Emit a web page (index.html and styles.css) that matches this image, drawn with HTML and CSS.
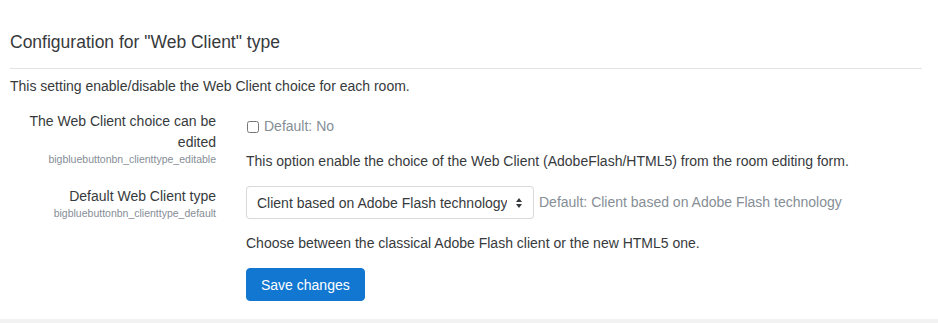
FILE: index.html
```html
<!DOCTYPE html>
<html lang="en">
<head>
    <meta charset="UTF-8">
    <meta name="viewport" content="width=device-width, initial-scale=1.0">
    <title>Web Client settings</title>
    <link rel="stylesheet" href="styles.css">
</head>
<body>
    <div class="main">
        <h3 class="section-title">Configuration for "Web Client" type</h3>
        <hr class="divider">
        <p class="section-info">This setting enable/disable the Web Client choice for each room.</p>

        <form class="settings">
            <div class="setting">
                <div class="setting-label">
                    <label for="clienttype_editable">The Web Client choice can be edited</label>
                    <span class="setting-name">bigbluebuttonbn_clienttype_editable</span>
                </div>
                <div class="setting-field">
                    <div class="check-row">
                        <input type="checkbox" id="clienttype_editable">
                        <span class="muted">Default: No</span>
                    </div>
                    <div class="setting-desc">This option enable the choice of the Web Client (AdobeFlash/HTML5) from the room editing form.</div>
                </div>
            </div>

            <div class="setting">
                <div class="setting-label">
                    <label for="clienttype_default">Default Web Client type</label>
                    <span class="setting-name">bigbluebuttonbn_clienttype_default</span>
                </div>
                <div class="setting-field">
                    <div class="select-row">
                        <div class="select-wrap">
                            <select id="clienttype_default" class="select">
                                <option>Client based on Adobe Flash technology</option>
                                <option>Client based on HTML5 technology</option>
                            </select>
                            <svg class="select-arrow" width="6" height="10" viewBox="0 0 6 10">
                                <path d="M0 4L3 0L6 4Z" fill="#373a3c"/>
                                <path d="M0 6L3 10L6 6Z" fill="#373a3c"/>
                            </svg>
                        </div>
                        <span class="muted">Default: Client based on Adobe Flash technology</span>
                    </div>
                    <div class="setting-desc">Choose between the classical Adobe Flash client or the new HTML5 one.</div>
                </div>
            </div>

            <div class="setting">
                <div></div>
                <div class="setting-field">
                    <button type="button" class="btn-primary">Save changes</button>
                </div>
            </div>
        </form>
    </div>
</body>
</html>
```

FILE: styles.css
```css
html, body {
    margin: 0;
    padding: 0;
}

body {
    background-color: #f2f2f2;
    font-family: 'Liberation Sans', Arial, sans-serif;
    font-size: 14px;
    line-height: 21px;
    color: #373a3c;
}

.main {
    background-color: #fff;
    padding: 32px 16px 4px 10px;
}

.section-title {
    margin: 0 0 15px;
    font-size: 17.5px;
    font-weight: normal;
    line-height: 21px;
}

.divider {
    margin: 0 0 7px;
    border: 0;
    border-top: 1px solid #e3e3e3;
}

.section-info {
    margin: 0 0 14px;
}

.setting {
    display: grid;
    grid-template-columns: 206px 1fr;
    column-gap: 30px;
    margin-bottom: 14px;
}

.setting-label {
    text-align: right;
}

.setting-label label {
    display: block;
}

.setting-name {
    display: block;
    font-size: 10.5px;
    line-height: 13px;
    color: #868e96;
}

.check-row {
    padding-top: 5px;
    display: flex;
    align-items: center;
}

.check-row input {
    width: 12px;
    height: 12px;
    margin: 0 5px 0 1px;
}

.muted {
    color: #868e96;
}

.setting-desc {
    margin-top: 14px;
}

.select-row {
    display: flex;
    align-items: center;
    gap: 5px;
}

.select-wrap {
    position: relative;
}

.select {
    appearance: none;
    -webkit-appearance: none;
    width: 288px;
    height: 33px;
    padding: 0 26px 0 10px;
    border: 1px solid rgba(0, 0, 0, 0.15);
    border-radius: 4px;
    background-color: #fff;
    font-family: inherit;
    font-size: 14px;
    color: #373a3c;
}

.select-arrow {
    position: absolute;
    right: 12px;
    top: 12px;
    pointer-events: none;
}

.btn-primary {
    height: 33px;
    padding: 0 14px;
    border: 1px solid #1177d1;
    border-radius: 4px;
    background-color: #1177d1;
    color: #fff;
    font-family: inherit;
    font-size: 14px;
    cursor: pointer;
}
```
